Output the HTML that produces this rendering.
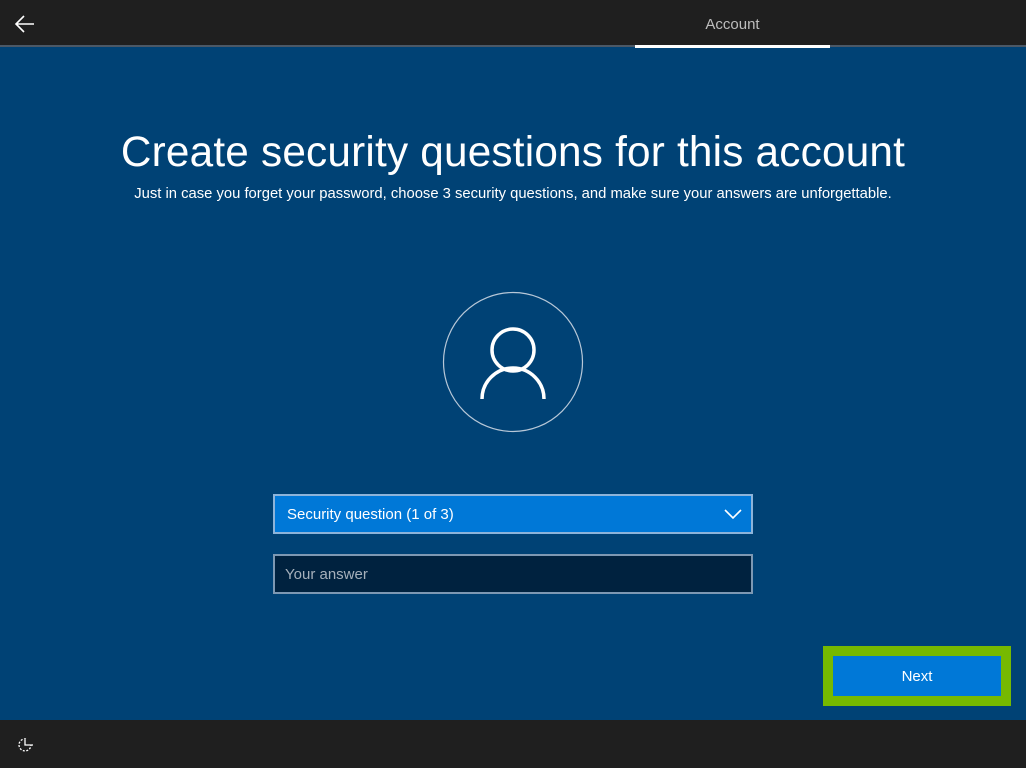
<!DOCTYPE html>
<html><head><style>
body{margin:0;width:1026px;height:768px;overflow:hidden;background:#004275;font-family:"Segoe UI","Liberation Sans",sans-serif;color:#fff;position:relative}
.top{position:absolute;left:0;top:0;width:1026px;height:46px;background:#1f1f1f}
.line{position:absolute;left:0;top:45px;width:1026px;height:2px;background:#4b5866}
.ul{position:absolute;left:635px;top:45px;width:195px;height:3px;background:#fff}
.acc{position:absolute;left:635px;width:195px;top:16px;text-align:center;font-size:15px;color:#bdbdbd}
.bot{position:absolute;left:0;top:720px;width:1026px;height:48px;background:#1f1f1f}
h1{position:absolute;top:128px;left:0;width:1026px;text-align:center;margin:0;font-weight:300;font-size:42.3px;letter-spacing:0.2px}
.sub{position:absolute;top:186px;left:0;width:1026px;text-align:center;font-size:14.8px}
.sel{position:absolute;left:273px;top:494px;width:476px;height:36px;background:#0078d7;border:2px solid #8db4da;box-sizing:content-box}
.sel span{position:absolute;left:12px;top:10px;font-size:15px}
.ans{position:absolute;left:273px;top:554px;width:476px;height:36px;background:#00223f;border:2px solid #7d98b3}
.ans span{position:absolute;left:10px;top:10px;font-size:15px;color:#a5b0bb}
.nb{position:absolute;left:823px;top:646px;width:168px;height:40px;border:10px solid #76b900;background:#0078d7;text-align:center;line-height:42px;font-size:15px}
</style></head><body>
<div class="top"></div><div class="line"></div><div class="ul"></div>
<div class="acc">Account</div>
<svg style="position:absolute;left:14px;top:14px" width="22" height="20"><path d="M2 10H20M10 2L2 10L10 18" stroke="#fff" stroke-width="1.6" fill="none"/></svg>
<h1>Create security questions for this account</h1>
<div class="sub">Just in case you forget your password, choose 3 security questions, and make sure your answers are unforgettable.</div>
<svg style="position:absolute;left:442px;top:291px" width="142" height="142"><circle cx="71" cy="71" r="69.5" stroke="#b8c8d8" stroke-width="1.2" fill="none"/><circle cx="71" cy="59" r="21" stroke="#fff" stroke-width="3.5" fill="none"/><path d="M40 108A31 31 0 0 1 102 108" stroke="#fff" stroke-width="3.5" fill="none"/></svg>
<div class="sel"><span>Security question (1 of 3)</span><svg style="position:absolute;right:8px;top:11px" width="20" height="14"><path d="M2 3L10 11L18 3" stroke="#fff" stroke-width="1.6" fill="none"/></svg></div>
<div class="ans"><span>Your answer</span></div>
<div class="nb">Next</div>
<div class="bot"></div>
<svg style="position:absolute;left:15px;top:736px" width="20" height="18"><path d="M11 3A6 6 0 1 0 16 9" stroke="#fff" stroke-width="1.3" fill="none" stroke-dasharray="2 1.5"/><path d="M10 4V9H18" stroke="#fff" stroke-width="1.3" fill="none"/></svg>
</body></html>
